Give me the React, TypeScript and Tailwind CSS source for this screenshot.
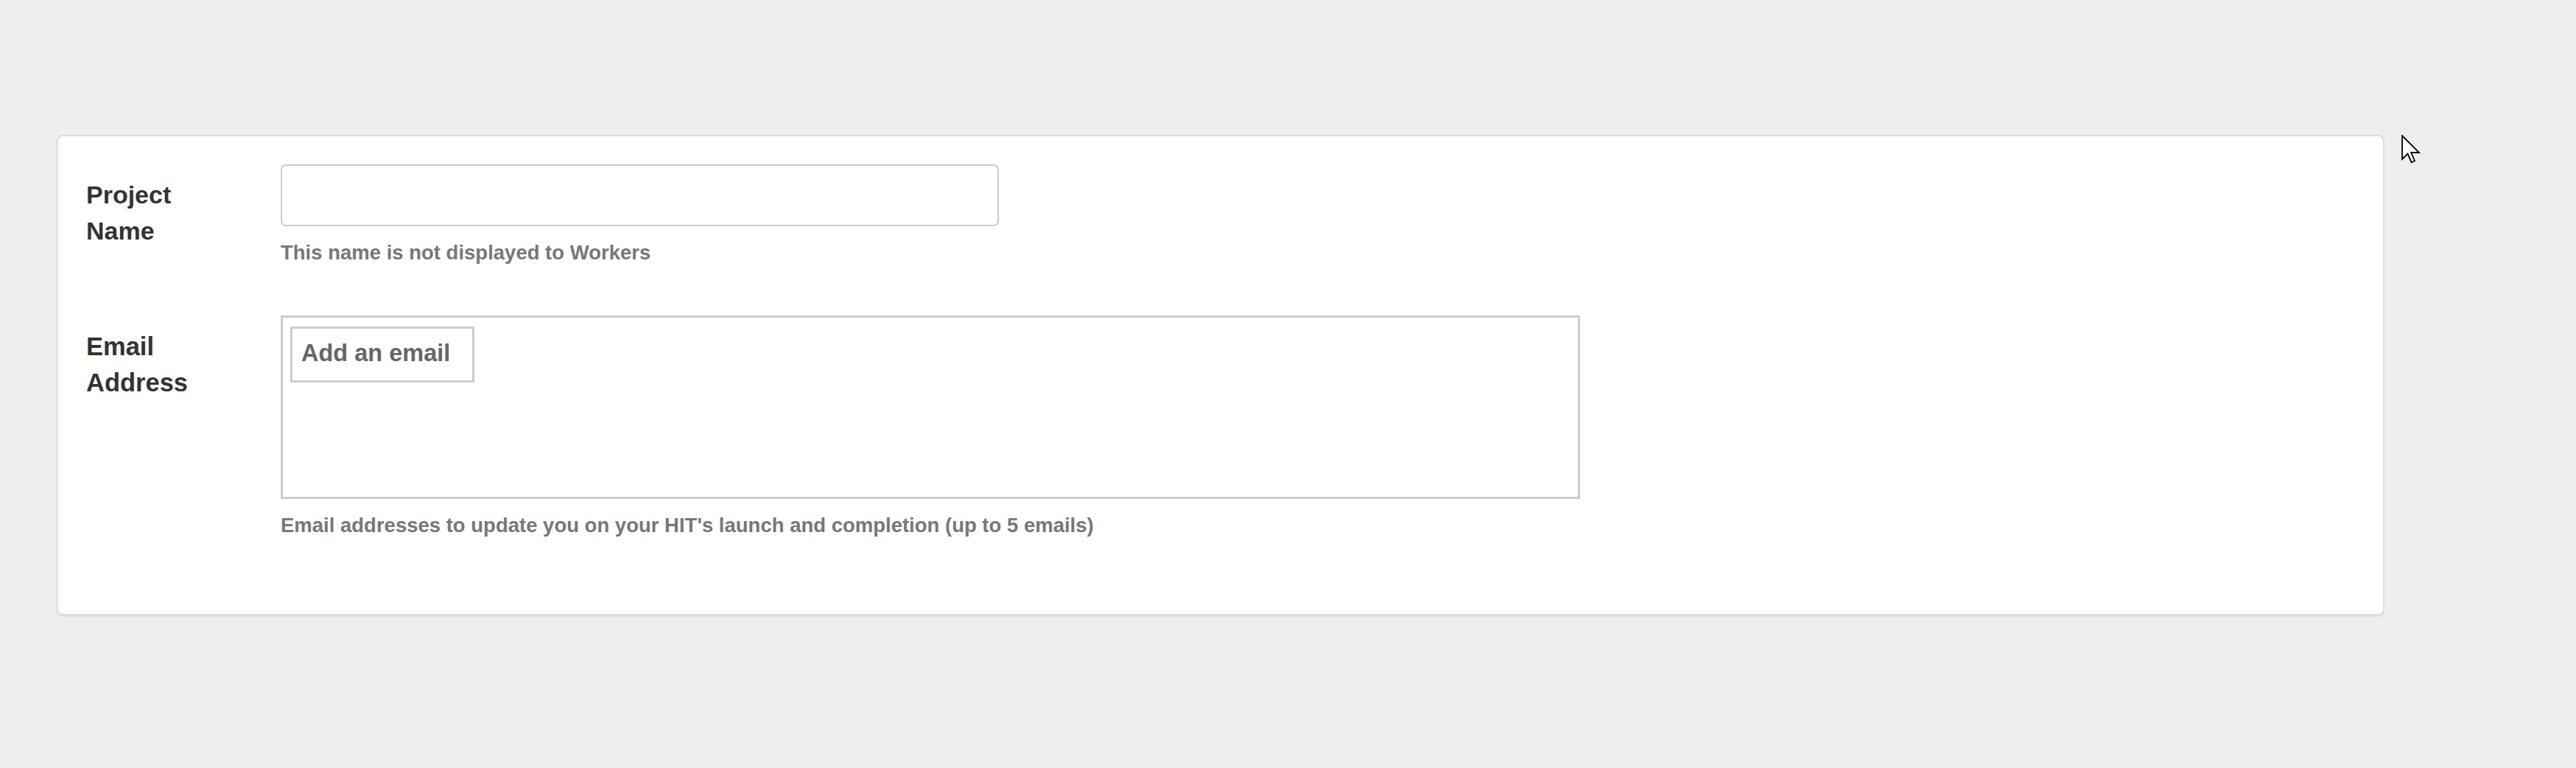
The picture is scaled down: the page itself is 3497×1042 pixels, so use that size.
import React from 'react';

const font = { fontFamily: '"Liberation Sans", Arial, Helvetica, sans-serif' };

function Cursor() {
  return (
    <svg
      className="absolute left-[3260px] top-[183px]"
      width="28"
      height="42"
      viewBox="0 0 14 21"
    >
      <path
        d="M0.5 0.5 L0.5 16.5 L4.3 12.8 L6.8 18.6 L9 17.6 L6.6 12 L12 12 Z"
        fill="#fff"
        stroke="#000"
        strokeWidth="0.9"
        strokeLinejoin="miter"
      />
    </svg>
  );
}

export default function App() {
  return (
    <div className="relative min-h-screen bg-[#eeeeee] pt-[183px] pl-[77px]" style={font}>
      <div className="w-[3160px] h-[652px] bg-white border-2 border-[#dcdcdc] rounded-[8px] shadow-[0_2px_2px_rgba(0,0,0,0.06)] pt-[38px] pl-[38px]">
        <div className="flex">
          <div className="w-[264px] pt-[17px] text-[34px] leading-[49px] font-bold text-[#333]">
            Project
            <br />
            Name
          </div>
          <div>
            <input
              type="text"
              className="block w-[975px] h-[84px] border-2 border-[#cccccc] rounded-[7px] bg-white outline-none"
            />
            <p className="mt-[17px] text-[27.5px] leading-[38px] font-bold text-[#777]">
              This name is not displayed to Workers
            </p>
          </div>
        </div>

        <div className="flex mt-[66px]">
          <div className="w-[264px] pt-[18px] text-[34.5px] leading-[49px] font-bold text-[#333]">
            Email
            <br />
            Address
          </div>
          <div>
            <div className="w-[1764px] h-[249px] border-[3px] border-[#cccccc] pt-[12px] pl-[10px]">
              <div className="w-[250px] h-[76px] border-[3px] border-[#cccccc] flex items-center pl-[12px] pb-[3px] text-[32.5px] font-bold text-[#666]">
                Add an email
              </div>
            </div>
            <p className="mt-[17px] text-[27.5px] leading-[38px] font-bold text-[#777]">
              Email addresses to update you on your HIT's launch and completion (up to 5 emails)
            </p>
          </div>
        </div>
      </div>
      <Cursor />
    </div>
  );
}
